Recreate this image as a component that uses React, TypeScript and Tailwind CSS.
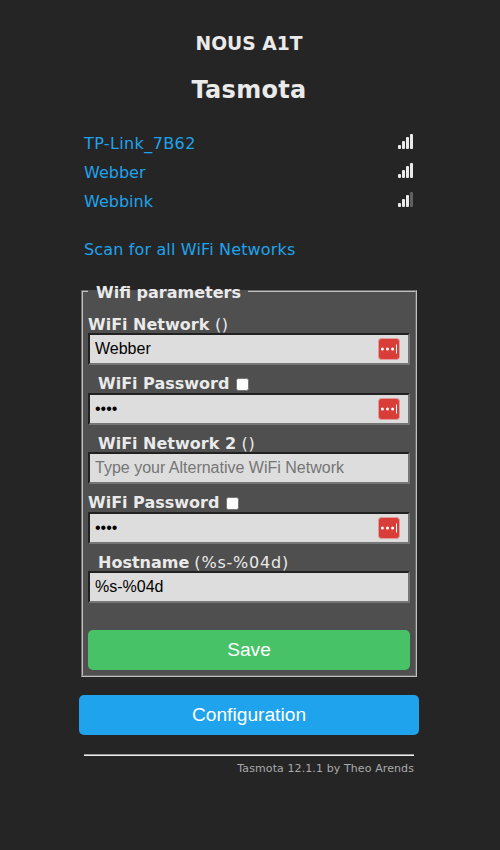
import React from "react";

function Signal({ level }: { level: number }) {
  const heights = [4, 8, 12, 15];
  return (
    <svg width="15" height="15" viewBox="0 0 15 15" className="mt-[6px] block">
      {heights.map((h, i) => (
        <rect key={h} x={i * 4} y={15 - h} width="3" height={h} rx="0.9" fill={i < level ? "#eaeaea" : "#606060"} />
      ))}
    </svg>
  );
}

function Network({ name, level, spacing = "" }: { name: string; level: number; spacing?: string }) {
  return (
    <div className="flex h-[29px] items-start justify-between pr-px">
      <a href="#" className={`mt-[6px] text-[#1fa3ec] ${spacing}`}>{name}</a>
      <Signal level={level} />
    </div>
  );
}

function PasswordBadge() {
  return (
    <svg width="22" height="22" viewBox="0 0 22 22" className="absolute right-[10px] top-[5px]">
      <rect x="0.5" y="0.5" width="21" height="21" rx="3" fill="#d93d38" stroke="#df9c9a" strokeWidth="1" />
      <circle cx="4.4" cy="11" r="1.5" fill="#fff" />
      <circle cx="9.5" cy="11" r="1.5" fill="#fff" />
      <circle cx="14.6" cy="11" r="1.5" fill="#fff" />
      <rect x="18" y="6.5" width="1" height="9" fill="#fff" />
    </svg>
  );
}

function Field(props: { type?: string; value?: string; placeholder?: string; badge?: boolean }) {
  return (
    <div className="relative h-8">
      <input
        type={props.type ?? "text"}
        defaultValue={props.value}
        placeholder={props.placeholder}
        className="block h-8 w-full border-2 border-t-[#212121] border-l-[#212121] border-r-[#767676] border-b-[#767676] bg-[#dddddd] px-[5px] pb-px font-['Liberation_Sans',Arial,sans-serif] text-[16px] tracking-normal text-black outline-none placeholder:text-[#757575]"
      />
      {props.badge && <PasswordBadge />}
    </div>
  );
}

function Check() {
  return <span className="ml-[6.5px] inline-block size-[13px] rounded-[2.5px] border border-[#767676] bg-white align-[-2px]" />;
}

export default function App() {
  return (
    <main className="min-h-[850px] bg-[#252525] font-['DejaVu_Sans',Verdana,sans-serif] text-[16px] leading-[20px] text-[#eaeaea]">
      <div className="ml-[79px] w-[340px] pt-[32px]">
        <h3 className="h-[24px] text-center text-[18.72px] leading-[24px] font-bold">NOUS A1T</h3>
        <h2 className="mt-[20px] h-[28px] text-center text-[24px] leading-[28px] font-bold tracking-[0.3px]">Tasmota</h2>
        <div className="mt-[24px] px-[5px]">
          <Network name="TP-Link_7B62" level={4} spacing="tracking-[0.38px]" />
          <Network name="Webber" level={4} />
          <Network name="Webbink" level={3} />
          <div className="mt-[24px] h-[20px] pt-px">
            <a href="#" className="tracking-[0.15px] text-[#1fa3ec]">Scan for all WiFi Networks</a>
          </div>
        </div>
        <section className="mt-[31px] ml-[2px] h-[387px] w-[336px] border-2 border-[#c0c0c0] bg-[#4f4f4f] px-[5px] [border-style:groove]">
          <div className="mt-[-10px] h-[20px] w-[160px] bg-[linear-gradient(#252525_0_8px,#4f4f4f_8px)] pt-px pl-[8px] font-bold whitespace-nowrap">Wifi parameters</div>
          <div className="mt-[12px] h-[19px] pt-px whitespace-nowrap"><b>WiFi Network</b> <span className="ml-[0.5px] tracking-[0.6px]">()</span></div>
          <Field value="Webber" badge />
          <div className="h-[28px] pt-[9px] pl-[10px] whitespace-nowrap"><b>WiFi Password</b><Check /></div>
          <Field type="password" value="1234" badge />
          <div className="h-[27px] pt-[9px] pl-[10px] whitespace-nowrap"><b>WiFi Network 2</b> <span className="ml-[0.5px] tracking-[0.6px]">()</span></div>
          <Field placeholder="Type your Alternative WiFi Network" />
          <div className="h-[28px] pt-[9px] whitespace-nowrap"><b>WiFi Password</b><Check /></div>
          <Field type="password" value="1234" badge />
          <div className="h-[27px] pt-[9px] pl-[10px] whitespace-nowrap"><b>Hostname</b> <span className="tracking-[0.8px]">(%s-%04d)</span></div>
          <Field value="%s-%04d" />
          <button className="mt-[27px] block h-10 w-full rounded-[5px] bg-[#47c266] font-['Liberation_Sans',Arial,sans-serif] text-[19.2px] text-white">Save</button>
        </section>
        <button className="mt-[18px] block h-10 w-full rounded-[5px] bg-[#1fa3ec] font-['Liberation_Sans',Arial,sans-serif] text-[19.2px] text-white">Configuration</button>
        <hr className="mx-[5px] mt-[19px] h-[2px] border-t border-b border-t-[#9a9a9a] border-b-[#eeeeee]" />
        <footer className="mt-[6px] mr-[5px] text-right text-[11px] leading-[14px] tracking-[0.1px] text-[#aaaaaa]">Tasmota 12.1.1 by Theo Arends</footer>
      </div>
    </main>
  );
}
